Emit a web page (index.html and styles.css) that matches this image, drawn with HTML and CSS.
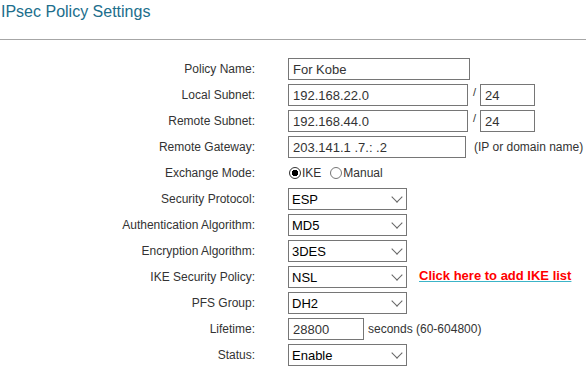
FILE: index.html
```html
<!DOCTYPE html>
<html lang="en">
<head>
  <meta charset="UTF-8" />
  <title>IPsec Policy Settings</title>
  <link rel="stylesheet" href="styles.css">
</head>
<body>
  <div class="title-bar">
    <h1 class="title">IPsec Policy Settings</h1>
  </div>

  <form class="policy-form">
    <label class="field-label">Policy Name:</label>
    <div class="field">
      <input class="text-input w-name" type="text" value="For Kobe" />
    </div>

    <label class="field-label">Local Subnet:</label>
    <div class="field">
      <input class="text-input w-subnet" type="text" value="192.168.22.0" />
      <span class="slash">/</span>
      <input class="text-input w-mask" type="text" value="24" />
    </div>

    <label class="field-label">Remote Subnet:</label>
    <div class="field">
      <input class="text-input w-subnet" type="text" value="192.168.44.0" />
      <span class="slash">/</span>
      <input class="text-input w-mask" type="text" value="24" />
    </div>

    <label class="field-label">Remote Gateway:</label>
    <div class="field">
      <input class="text-input w-gateway" type="text" value="203.141.1 .7.: .2" />
      <span class="hint hint-gateway">(IP or domain name)</span>
    </div>

    <label class="field-label">Exchange Mode:</label>
    <div class="field">
      <input class="radio" type="radio" name="mode" id="modeIke" checked />
      <label class="radio-label" for="modeIke">IKE</label>
      <input class="radio radio-second" type="radio" name="mode" id="modeManual" />
      <label class="radio-label" for="modeManual">Manual</label>
    </div>

    <label class="field-label">Security Protocol:</label>
    <div class="field">
      <span class="select-wrap"><select class="select"><option>ESP</option><option>AH</option></select></span>
    </div>

    <label class="field-label">Authentication Algorithm:</label>
    <div class="field">
      <span class="select-wrap"><select class="select"><option>MD5</option><option>SHA1</option></select></span>
    </div>

    <label class="field-label">Encryption Algorithm:</label>
    <div class="field">
      <span class="select-wrap"><select class="select"><option>3DES</option><option>DES</option><option>AES</option></select></span>
    </div>

    <label class="field-label">IKE Security Policy:</label>
    <div class="field">
      <span class="select-wrap"><select class="select"><option>NSL</option></select></span>
      <a class="ike-link" href="#">Click here to add IKE list</a>
    </div>

    <label class="field-label">PFS Group:</label>
    <div class="field">
      <span class="select-wrap"><select class="select"><option>DH2</option><option>DH1</option><option>DH5</option></select></span>
    </div>

    <label class="field-label">Lifetime:</label>
    <div class="field">
      <input class="text-input w-life" type="text" value="28800" />
      <span class="hint hint-life">seconds (60-604800)</span>
    </div>

    <label class="field-label">Status:</label>
    <div class="field">
      <span class="select-wrap"><select class="select"><option>Enable</option><option>Disable</option></select></span>
    </div>
  </form>
</body>
</html>
```

FILE: styles.css
```css
* {
  margin: 0;
  padding: 0;
  box-sizing: border-box;
}

body {
  font-family: "Liberation Sans", Arial, sans-serif;
  font-size: 12px;
  color: #333;
  background: #fff;
}

.title-bar {
  padding: 3px 0 18px 1px;
  border-bottom: 1px solid #a6a6a6;
}

.title {
  font-size: 16px;
  font-weight: normal;
  line-height: 18px;
  color: #206e8c;
}

.policy-form {
  margin-top: 16px;
  display: grid;
  grid-template-columns: 255px 1fr;
  grid-auto-rows: 26px;
  column-gap: 33px;
  align-items: center;
}

.field-label {
  text-align: right;
  white-space: nowrap;
}

.field {
  display: flex;
  align-items: center;
  white-space: nowrap;
}

.text-input {
  height: 22px;
  border: 1px solid #767676;
  padding: 0 4px;
  font-family: inherit;
  font-size: 13px;
  color: #333;
  background: #fff;
  outline: none;
}

.w-name { width: 182px; }
.w-subnet { width: 180px; }
.w-mask { width: 55px; }
.w-gateway { width: 178px; }
.w-life { width: 76px; }

.slash {
  align-self: flex-start;
  font-size: 11px;
  line-height: 10px;
  padding-top: 3px;
  margin: 0 4px 0 5px;
  color: #333;
}

.hint {
  color: #333;
}

.hint-gateway { margin-left: 8px; }
.hint-life { margin-left: 4px; }

.radio {
  appearance: none;
  width: 12px;
  height: 12px;
  margin-left: 1px;
  border: 1px solid #767676;
  border-radius: 50%;
  background: #fff;
}

.radio:checked {
  border-color: #333;
  background: radial-gradient(circle, #000 0 3px, #fff 3.5px);
}

.radio-second {
  margin-left: 9px;
}

.radio-label {
  margin-left: 1px;
}

.select-wrap {
  position: relative;
  display: inline-block;
}

.select-wrap::after {
  content: "";
  position: absolute;
  right: 6px;
  top: calc(50% - 6px);
  width: 7px;
  height: 7px;
  border-right: 1px solid #666;
  border-bottom: 1px solid #666;
  transform: rotate(45deg);
  pointer-events: none;
}

.select {
  appearance: none;
  display: block;
  width: 119px;
  height: 22px;
  border: 1px solid #767676;
  border-radius: 0;
  padding: 0 0 0 3px;
  font-family: inherit;
  font-size: 13px;
  color: #000;
  background: #fff;
  outline: none;
}

.ike-link {
  margin-left: 12px;
  margin-top: -3px;
  font-size: 13px;
  font-weight: bold;
  color: #ff0000;
  text-decoration: underline;
  text-decoration-color: #3cb4c8;
}
```
